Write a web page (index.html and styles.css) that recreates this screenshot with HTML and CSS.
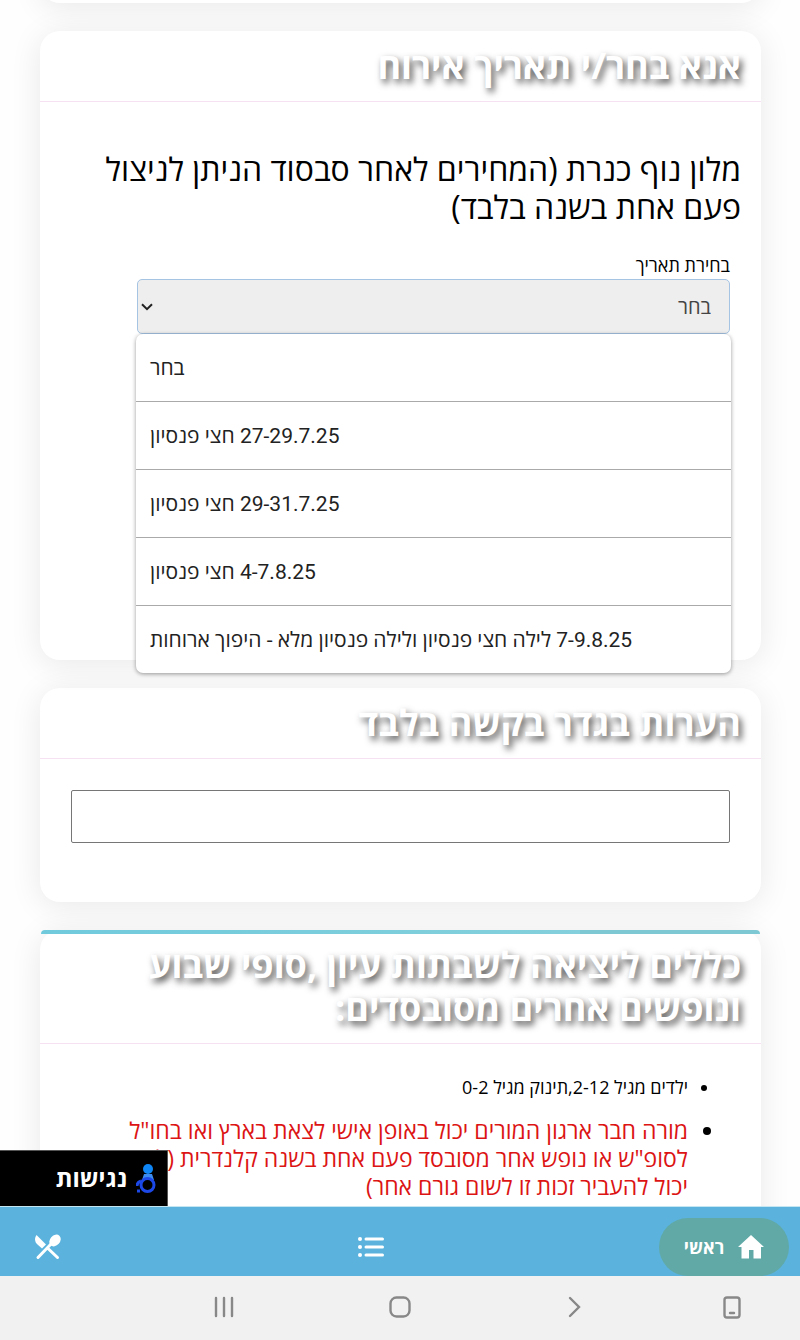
FILE: index.html
```html
<!DOCTYPE html>
<html lang="he" dir="rtl">
<head>
    <meta charset="UTF-8">
    <meta name="viewport" content="width=device-width, initial-scale=1.0">
    <title>בחירת תאריך אירוח</title>
    <link rel="stylesheet" href="styles.css">
</head>
<body>
    <main class="content">
        <section class="card card-previous"></section>

        <section class="card card-dates">
            <h2 class="card-title">אנא בחר/י תאריך אירוח</h2>
            <div class="card-body">
                <h3 class="hotel-name">מלון נוף כנרת (המחירים לאחר סבסוד הניתן לניצול פעם אחת בשנה בלבד)</h3>
                <div class="field">
                    <label for="date">בחירת תאריך</label>
                    <div class="select-wrap">
                        <select id="date" class="select">
                            <option>בחר</option>
                            <option>27-29.7.25 חצי פנסיון</option>
                            <option>29-31.7.25 חצי פנסיון</option>
                            <option>4-7.8.25 חצי פנסיון</option>
                            <option>7-9.8.25 לילה חצי פנסיון ולילה פנסיון מלא - היפוך ארוחות</option>
                        </select>
                        <svg class="select-arrow" viewBox="0 0 12 8"><path d="M1 1.2l5 5 5-5"/></svg>
                        <ul class="options" role="listbox" aria-label="בחירת תאריך">
                            <li role="option">בחר</li>
                            <li role="option">27-29.7.25 חצי פנסיון</li>
                            <li role="option">29-31.7.25 חצי פנסיון</li>
                            <li role="option">4-7.8.25 חצי פנסיון</li>
                            <li role="option">7-9.8.25 לילה חצי פנסיון ולילה פנסיון מלא - היפוך ארוחות</li>
                        </ul>
                    </div>
                </div>
            </div>
        </section>

        <section class="card card-notes">
            <h2 class="card-title">הערות בגדר בקשה בלבד</h2>
            <div class="card-body">
                <textarea class="notes" aria-label="הערות בגדר בקשה בלבד"></textarea>
            </div>
        </section>

        <section class="card card-rules">
            <h2 class="card-title">כללים ליציאה לשבתות עיון ,סופי שבוע ונופשים אחרים מסובסדים:</h2>
            <ul class="rules">
                <li>ילדים מגיל 2-12,תינוק מגיל 0-2</li>
                <li class="important">מורה חבר ארגון המורים יכול באופן אישי לצאת בארץ ואו בחו"ל לסופ"ש או נופש אחר מסובסד פעם אחת בשנה קלנדרית (לא יכול להעביר זכות זו לשום גורם אחר)</li>
            </ul>
        </section>

        <button class="accessibility" type="button">
            <svg viewBox="0 0 20 30">
                <circle class="acc-head" cx="12" cy="5" r="5"/>
                <path class="acc-body" d="M8 10h8l2 6H6z"/>
                <circle class="acc-wheel" cx="11.500" cy="21" r="6.500"/>
                <path class="acc-foot" d="M5 17c-3 1-4 2-4 5M1 27h3"/>
            </svg>
            <span>נגישות</span>
        </button>
    </main>

    <nav class="tabs">
        <a class="tab tab-active" href="#home">
            <svg viewBox="0 0 26 24"><path d="M13 0L0 12h3.500v11.500H11V15h4.500v8.500H23V12h3z"/></svg>
            <span>ראשי</span>
        </a>
        <a class="tab" href="#list" aria-label="רשימה">
            <svg viewBox="0 0 26 22">
                <circle cx="2" cy="3" r="2"/><circle cx="2" cy="11" r="2"/><circle cx="2" cy="19" r="2"/>
                <path class="line" d="M8 3h16.500M8 11h16.500M8 19h16.500"/>
            </svg>
        </a>
        <a class="tab" href="#food" aria-label="מסעדות">
            <svg viewBox="0 0 26 26">
                <path d="M1.500 1C-1 5 0 8 2.500 10.500L7 14.500l4-4z"/>
                <ellipse cx="20" cy="6.500" rx="5" ry="6.500" transform="rotate(42 20 6.500)"/>
                <path class="line" d="M16.500 9.500L3 23.500M12.500 14l10 9.500"/>
            </svg>
        </a>
    </nav>

    <footer class="system-bar" dir="ltr">
        <span></span>
        <button type="button" aria-label="Recents"><svg viewBox="0 0 22 22"><path d="M3 2v18M11 2v18M19 2v18"/></svg></button>
        <button type="button" aria-label="Home"><svg viewBox="0 0 22 22"><rect x="1.500" y="1.500" width="19" height="19" rx="6"/></svg></button>
        <button type="button" aria-label="Back"><svg viewBox="0 0 22 22"><path d="M5 2l9 9-9 9"/></svg></button>
        <button type="button" aria-label="Rotate"><svg class="phone" viewBox="0 0 18 24"><rect x="1.500" y="2.500" width="15" height="20" rx="2.500"/><path d="M7 18h4"/></svg></button>
    </footer>
</body>
</html>
```

FILE: styles.css
```css
* {
    box-sizing: border-box;
}

body {
    margin: 0;
    height: 100vh;
    display: flex;
    flex-direction: column;
    overflow: hidden;
    background: #fefefe;
    color: #000;
    font-family: "Open Sans", "Noto Sans", sans-serif;
}

h2, h3, ul {
    margin: 0;
    padding: 0;
    font-weight: 400;
}

/* content */
.content {
    position: relative;
    flex: 1;
    min-height: 0;
    overflow: hidden;
    padding: 0 39px 0 40px;
    display: flex;
    flex-direction: column;
    gap: 28px;
}

.card {
    position: relative;
    flex-shrink: 0;
    background: #fff;
    border-radius: 20px;
    box-shadow: 0 4px 32px rgba(0, 0, 0, 0.09);
}

.card-previous {
    height: 40px;
    margin-top: -37px;
}

.card-title {
    padding: 13px 20px 14px;
    border-bottom: 1px solid #f5e1f1;
    color: #fff;
    font-size: 36px;
    font-weight: 700;
    line-height: 43px;
    text-shadow: 3px 4px 7px rgba(0, 0, 0, 0.7);
}

.card-body {
    padding: 31px;
}

.card-dates {
    height: 629px;
    z-index: 1;
}

.card-dates .card-body {
    padding: 48px 20px;
}

.hotel-name {
    font-size: 32px;
    line-height: 38px;
}

.field {
    padding: 27px 11px 0;
}

.field label {
    display: block;
    padding-bottom: 1px;
    font-size: 18px;
    line-height: 25px;
}

.select-wrap {
    position: relative;
    width: 90%;
}

.select {
    display: block;
    width: 100%;
    height: 55px;
    padding: 0 18px;
    border: 1px solid #a5c3e3;
    border-radius: 5px;
    background: #eee;
    color: #444;
    font: 400 20px "Open Sans", sans-serif;
    appearance: none;
}

.select-arrow {
    position: absolute;
    left: 4px;
    top: 24px;
    width: 12px;
    height: 8px;
    fill: none;
    stroke: #222;
    stroke-width: 2;
}

.options {
    position: absolute;
    top: 55px;
    left: -1px;
    right: -1px;
    border-radius: 7px;
    background: #fff;
    box-shadow: 0 1px 4px rgba(0, 0, 0, 0.4);
    color: #222;
    font-family: Roboto, "Open Sans", sans-serif;
    font-size: 21px;
    list-style: none;
    text-align: left;
}

.options li {
    padding: 1px 14px 0;
    border-bottom: 1px solid #aaa;
    line-height: 66px;
}

.options li:last-child {
    border-bottom: 0;
}

.card-notes {
    height: 214px;
}

.notes {
    display: block;
    width: 100%;
    height: 53px;
    border: 1px solid #767676;
    border-radius: 2px;
    background: #fff;
    font: 20px "Open Sans", sans-serif;
    resize: none;
}

.card-rules {
    min-height: 400px;
}

.card-rules::before {
    content: "";
    position: absolute;
    top: 0;
    left: 1px;
    right: 1px;
    height: 4px;
    border-radius: 6px 6px 0 0;
    background: linear-gradient(to left, #7ec8d4 25%, #84d0dc 25%, #70cadc);
}

.rules {
    padding: 29px 73px 0 80px;
    font-size: 18px;
    line-height: 28px;
}

.rules li {
    margin-bottom: 15px;
}

.rules .important {
    color: #dc1414;
    font-size: 23px;
}

.important::marker {
    color: #000;
}

.accessibility {
    position: absolute;
    left: 0;
    bottom: 0;
    width: 168px;
    height: 56px;
    padding: 0 11px 3px;
    display: flex;
    align-items: center;
    gap: 9px;
    border: 1px solid #555;
    border-width: 1px 1px 0 0;
    background: #000;
    color: #fff;
    font: 700 24px "Open Sans", sans-serif;
    z-index: 2;
}

.accessibility svg {
    width: 20px;
    height: 30px;
    margin-top: 4px;
}

.acc-head {
    fill: #0f86f5;
}

.acc-body {
    fill: #3d8df0;
}

.acc-wheel,
.acc-foot {
    fill: none;
    stroke: #1c48e8;
    stroke-width: 3;
}

/* bottom navigation */
.tabs {
    height: 70px;
    padding: 11px 11px 0 13px;
    display: flex;
    justify-content: space-between;
    border-top: 1px solid #c4e6f3;
    background: #5bb3dd;
}

.tab {
    width: 70px;
    display: flex;
    align-items: center;
    justify-content: center;
    color: #fff;
    font-size: 18px;
    font-weight: 700;
    text-decoration: none;
}

.tab svg {
    width: 26px;
    height: 26px;
    fill: #fff;
}

.tab .line {
    stroke: #fff;
    stroke-width: 3;
    stroke-linecap: round;
}

.tab-active {
    width: 130px;
    gap: 14px;
    border-radius: 29px;
    background: #60a9a6;
}

.system-bar {
    height: 64px;
    padding-bottom: 3px;
    display: grid;
    grid-template-columns: 17% 22% 22% 22% 17%;
    align-items: center;
    background: #f1f1f1;
}

.system-bar button {
    padding: 0;
    border: 0;
    background: none;
}

.system-bar svg {
    display: block;
    width: 22px;
    height: 22px;
    margin: 0 auto;
    fill: none;
    stroke: #888;
    stroke-width: 2.4;
    stroke-linecap: round;
}

.system-bar .phone {
    width: 18px;
    height: 24px;
}
```
